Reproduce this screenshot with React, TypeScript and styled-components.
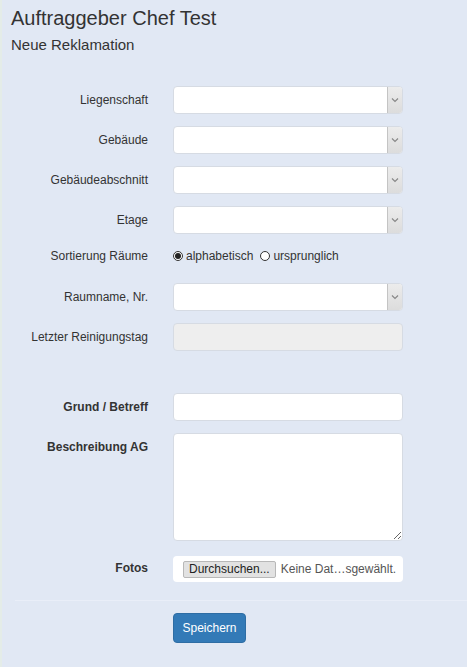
import styled, { createGlobalStyle } from 'styled-components';

const GlobalStyle = createGlobalStyle`
  html, body {
    margin: 0;
    padding: 0;
    background: #e1e8f4;
  }
  body {
    font-family: "Liberation Sans", Arial, sans-serif;
    color: #333;
    min-height: 667px;
  }
`;

const Page = styled.div`
  min-height: 667px;
  box-sizing: border-box;
  padding: 7px 0 24px 9px;
  border-left: 2px solid #e4ece8;
`;

const Title = styled.h1`
  margin: 0;
  font-size: 20px;
  font-weight: 400;
  line-height: 22px;
  color: #333;
`;

const SubTitle = styled.h2`
  margin: 8px 0 0;
  font-size: 15px;
  font-weight: 400;
  line-height: 16px;
  color: #333;
`;

const Form = styled.form`
  margin-top: 33px;
  display: grid;
  grid-template-columns: 137px 230px;
  column-gap: 25px;
  row-gap: 12px;
  align-items: center;
`;

const Label = styled.label<{ $bold?: boolean; $top?: boolean }>`
  text-align: right;
  font-size: 12px;
  line-height: 14px;
  font-weight: ${(p) => (p.$bold ? 700 : 400)};
  color: #333;
  align-self: ${(p) => (p.$top ? 'start' : 'center')};
  padding-top: ${(p) => (p.$top ? '7px' : '0')};
`;

const SelectBox = styled.div`
  height: 28px;
  display: flex;
  background: #fff;
  border: 1px solid #d6dbe3;
  border-radius: 4px;
  box-sizing: border-box;
  overflow: hidden;
`;

const SelectField = styled.div`
  flex: 1;
`;

const SelectArrow = styled.div`
  width: 14px;
  display: flex;
  align-items: center;
  justify-content: center;
  background: linear-gradient(#ececec, #dcdcdc);
  border-left: 1px solid #c4c4c4;
`;

const TextInput = styled.input<{ $disabled?: boolean }>`
  height: 28px;
  width: 230px;
  box-sizing: border-box;
  border: 1px solid #d6dbe3;
  border-radius: 4px;
  background: ${(p) => (p.$disabled ? '#eeeeee' : '#fff')};
  outline: none;
  padding: 0 8px;
  font-family: inherit;
`;

const TextArea = styled.textarea`
  width: 230px;
  height: 108px;
  box-sizing: border-box;
  border: 1px solid #d6dbe3;
  border-radius: 4px;
  background: #fff;
  outline: none;
  font-family: inherit;
  resize: vertical;
`;

const RadioGroup = styled.div`
  display: flex;
  align-items: center;
  gap: 7px;
  font-size: 12px;
  height: 25px;
  box-sizing: border-box;
  padding-bottom: 5px;
`;

const RadioOption = styled.span`
  display: flex;
  align-items: center;
  gap: 3px;
`;

const RadioDot = styled.span<{ $checked?: boolean }>`
  width: 10px;
  height: 10px;
  box-sizing: border-box;
  border-radius: 50%;
  border: 1px solid #333;
  background: #fff;
  display: flex;
  align-items: center;
  justify-content: center;
  &::after {
    content: '';
    display: ${(p) => (p.$checked ? 'block' : 'none')};
    width: 6px;
    height: 6px;
    border-radius: 50%;
    background: #222;
  }
`;

const RadioLabel = styled(Label)`
  padding-bottom: 5px;
`;

const Spacer = styled.div`
  grid-column: 1 / 3;
  height: 18px;
`;

const FileBox = styled.div`
  height: 26px;
  margin-top: 3px;
  display: flex;
  align-items: center;
  gap: 5px;
  background: #fff;
  border-radius: 4px;
  padding-left: 10px;
  font-size: 12px;
  color: #555;
`;

const FileButton = styled.span`
  height: 17px;
  box-sizing: border-box;
  padding: 0 5px;
  display: flex;
  align-items: center;
  background: #e2e2e2;
  border: 1px solid #b8b8b8;
  border-radius: 2px;
  color: #222;
  font-size: 12px;
`;

const Divider = styled.hr`
  margin: 18px 0 0 4px;
  border: 0;
  border-top: 1px solid #e9eef8;
`;

const Actions = styled.div`
  padding: 12px 0 0 162px;
`;

const SaveButton = styled.button`
  width: 73px;
  height: 30px;
  background: #337ab7;
  color: #fff;
  border: 1px solid #2e6da4;
  border-radius: 4px;
  font-family: inherit;
  font-size: 12px;
`;

const Chevron = () => (
  <svg width="8" height="6" viewBox="0 0 8 6">
    <path d="M1 1.5 L4 4.5 L7 1.5" fill="none" stroke="#888" strokeWidth="1.2" />
  </svg>
);

const Select = () => (
  <SelectBox>
    <SelectField />
    <SelectArrow>
      <Chevron />
    </SelectArrow>
  </SelectBox>
);

const App = () => (
  <Page>
    <GlobalStyle />
    <Title>Auftraggeber Chef Test</Title>
    <SubTitle>Neue Reklamation</SubTitle>
    <Form>
      <Label>Liegenschaft</Label>
      <Select />
      <Label>Gebäude</Label>
      <Select />
      <Label>Gebäudeabschnitt</Label>
      <Select />
      <Label>Etage</Label>
      <Select />
      <RadioLabel>Sortierung Räume</RadioLabel>
      <RadioGroup>
        <RadioOption>
          <RadioDot $checked />
          alphabetisch
        </RadioOption>
        <RadioOption>
          <RadioDot />
          ursprunglich
        </RadioOption>
      </RadioGroup>
      <Label>Raumname, Nr.</Label>
      <Select />
      <Label>Letzter Reinigungstag</Label>
      <TextInput $disabled disabled />
      <Spacer />
      <Label $bold>Grund / Betreff</Label>
      <TextInput />
      <Label $bold $top>Beschreibung AG</Label>
      <TextArea />
      <Label $bold>Fotos</Label>
      <FileBox>
        <FileButton>Durchsuchen...</FileButton>
        Keine Dat…sgewählt.
      </FileBox>
    </Form>
    <Divider />
    <Actions>
      <SaveButton type="button">Speichern</SaveButton>
    </Actions>
  </Page>
);

export default App;
